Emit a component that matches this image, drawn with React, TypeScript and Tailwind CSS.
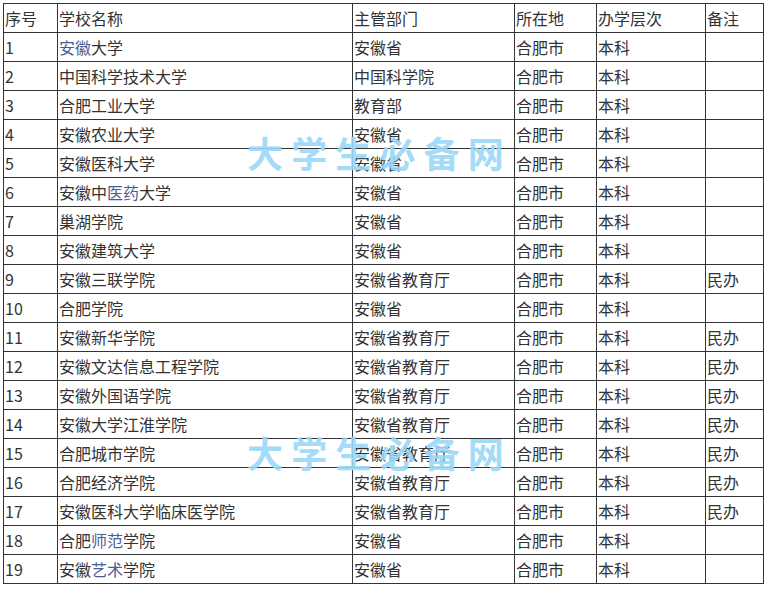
import React from "react";

type Seg = string | { l: string };
type Row = [string, Seg[], string, string, string, string];

const rows: Row[] = [
  ["1", [{ l: "安徽" }, "大学"], "安徽省", "合肥市", "本科", ""],
  ["2", ["中国科学技术大学"], "中国科学院", "合肥市", "本科", ""],
  ["3", ["合肥工业大学"], "教育部", "合肥市", "本科", ""],
  ["4", ["安徽农业大学"], "安徽省", "合肥市", "本科", ""],
  ["5", ["安徽医科大学"], "安徽省", "合肥市", "本科", ""],
  ["6", ["安徽中", { l: "医药" }, "大学"], "安徽省", "合肥市", "本科", ""],
  ["7", ["巢湖学院"], "安徽省", "合肥市", "本科", ""],
  ["8", ["安徽建筑大学"], "安徽省", "合肥市", "本科", ""],
  ["9", ["安徽三联学院"], "安徽省教育厅", "合肥市", "本科", "民办"],
  ["10", ["合肥学院"], "安徽省", "合肥市", "本科", ""],
  ["11", ["安徽新华学院"], "安徽省教育厅", "合肥市", "本科", "民办"],
  ["12", ["安徽文达信息工程学院"], "安徽省教育厅", "合肥市", "本科", "民办"],
  ["13", ["安徽外国语学院"], "安徽省教育厅", "合肥市", "本科", "民办"],
  ["14", ["安徽大学江淮学院"], "安徽省教育厅", "合肥市", "本科", "民办"],
  ["15", ["合肥城市学院"], "安徽省教育厅", "合肥市", "本科", "民办"],
  ["16", ["合肥经济学院"], "安徽省教育厅", "合肥市", "本科", "民办"],
  ["17", ["安徽医科大学临床医学院"], "安徽省教育厅", "合肥市", "本科", "民办"],
  ["18", ["合肥", { l: "师范" }, "学院"], "安徽省", "合肥市", "本科", ""],
  ["19", ["安徽", { l: "艺术" }, "学院"], "安徽省", "合肥市", "本科", ""],
];

const cell =
  "border border-[#333] h-[29px] p-0 pl-px align-middle text-left font-normal whitespace-nowrap";

function Watermark({ top }: { top: number }) {
  return (
    <div
      className="absolute left-[247px] pointer-events-none select-none text-[36px] font-bold leading-none text-[#9ad8f8] whitespace-pre"
      style={{ top, fontFamily: '"Noto Sans CJK SC", "Noto Sans", sans-serif', opacity: 0.9 }}
    >
      大 学 生 必 备 网
    </div>
  );
}

export default function App() {
  return (
    <div className="relative w-[767px] h-[589px] bg-white overflow-hidden">
      <div className="pt-[3px] pl-[3px]">
        <table
          className="table-fixed border-collapse text-[16px] text-[#333] leading-none"
          style={{ fontFamily: '"Noto Sans CJK SC", "Noto Sans", sans-serif', width: 760 }}
        >
          <colgroup>
            <col className="w-[54px]" />
            <col className="w-[295px]" />
            <col className="w-[162px]" />
            <col className="w-[82px]" />
            <col className="w-[109px]" />
            <col className="w-[58px]" />
          </colgroup>
          <thead>
            <tr>
              <th className={cell}>序号</th>
              <th className={cell}>学校名称</th>
              <th className={cell}>主管部门</th>
              <th className={cell}>所在地</th>
              <th className={cell}>办学层次</th>
              <th className={cell}>备注</th>
            </tr>
          </thead>
          <tbody>
            {rows.map((r) => (
              <tr key={r[0]}>
                <td className={cell}>{r[0]}</td>
                <td className={cell}>
                  {r[1].map((s, i) =>
                    typeof s === "string" ? (
                      <span key={i}>{s}</span>
                    ) : (
                      <span key={i} className="text-[#4f5b93]">
                        {s.l}
                      </span>
                    )
                  )}
                </td>
                <td className={cell}>{r[2]}</td>
                <td className={cell}>{r[3]}</td>
                <td className={cell}>{r[4]}</td>
                <td className={cell}>{r[5]}</td>
              </tr>
            ))}
          </tbody>
        </table>
      </div>
      <Watermark top={134} />
      <Watermark top={434} />
    </div>
  );
}
